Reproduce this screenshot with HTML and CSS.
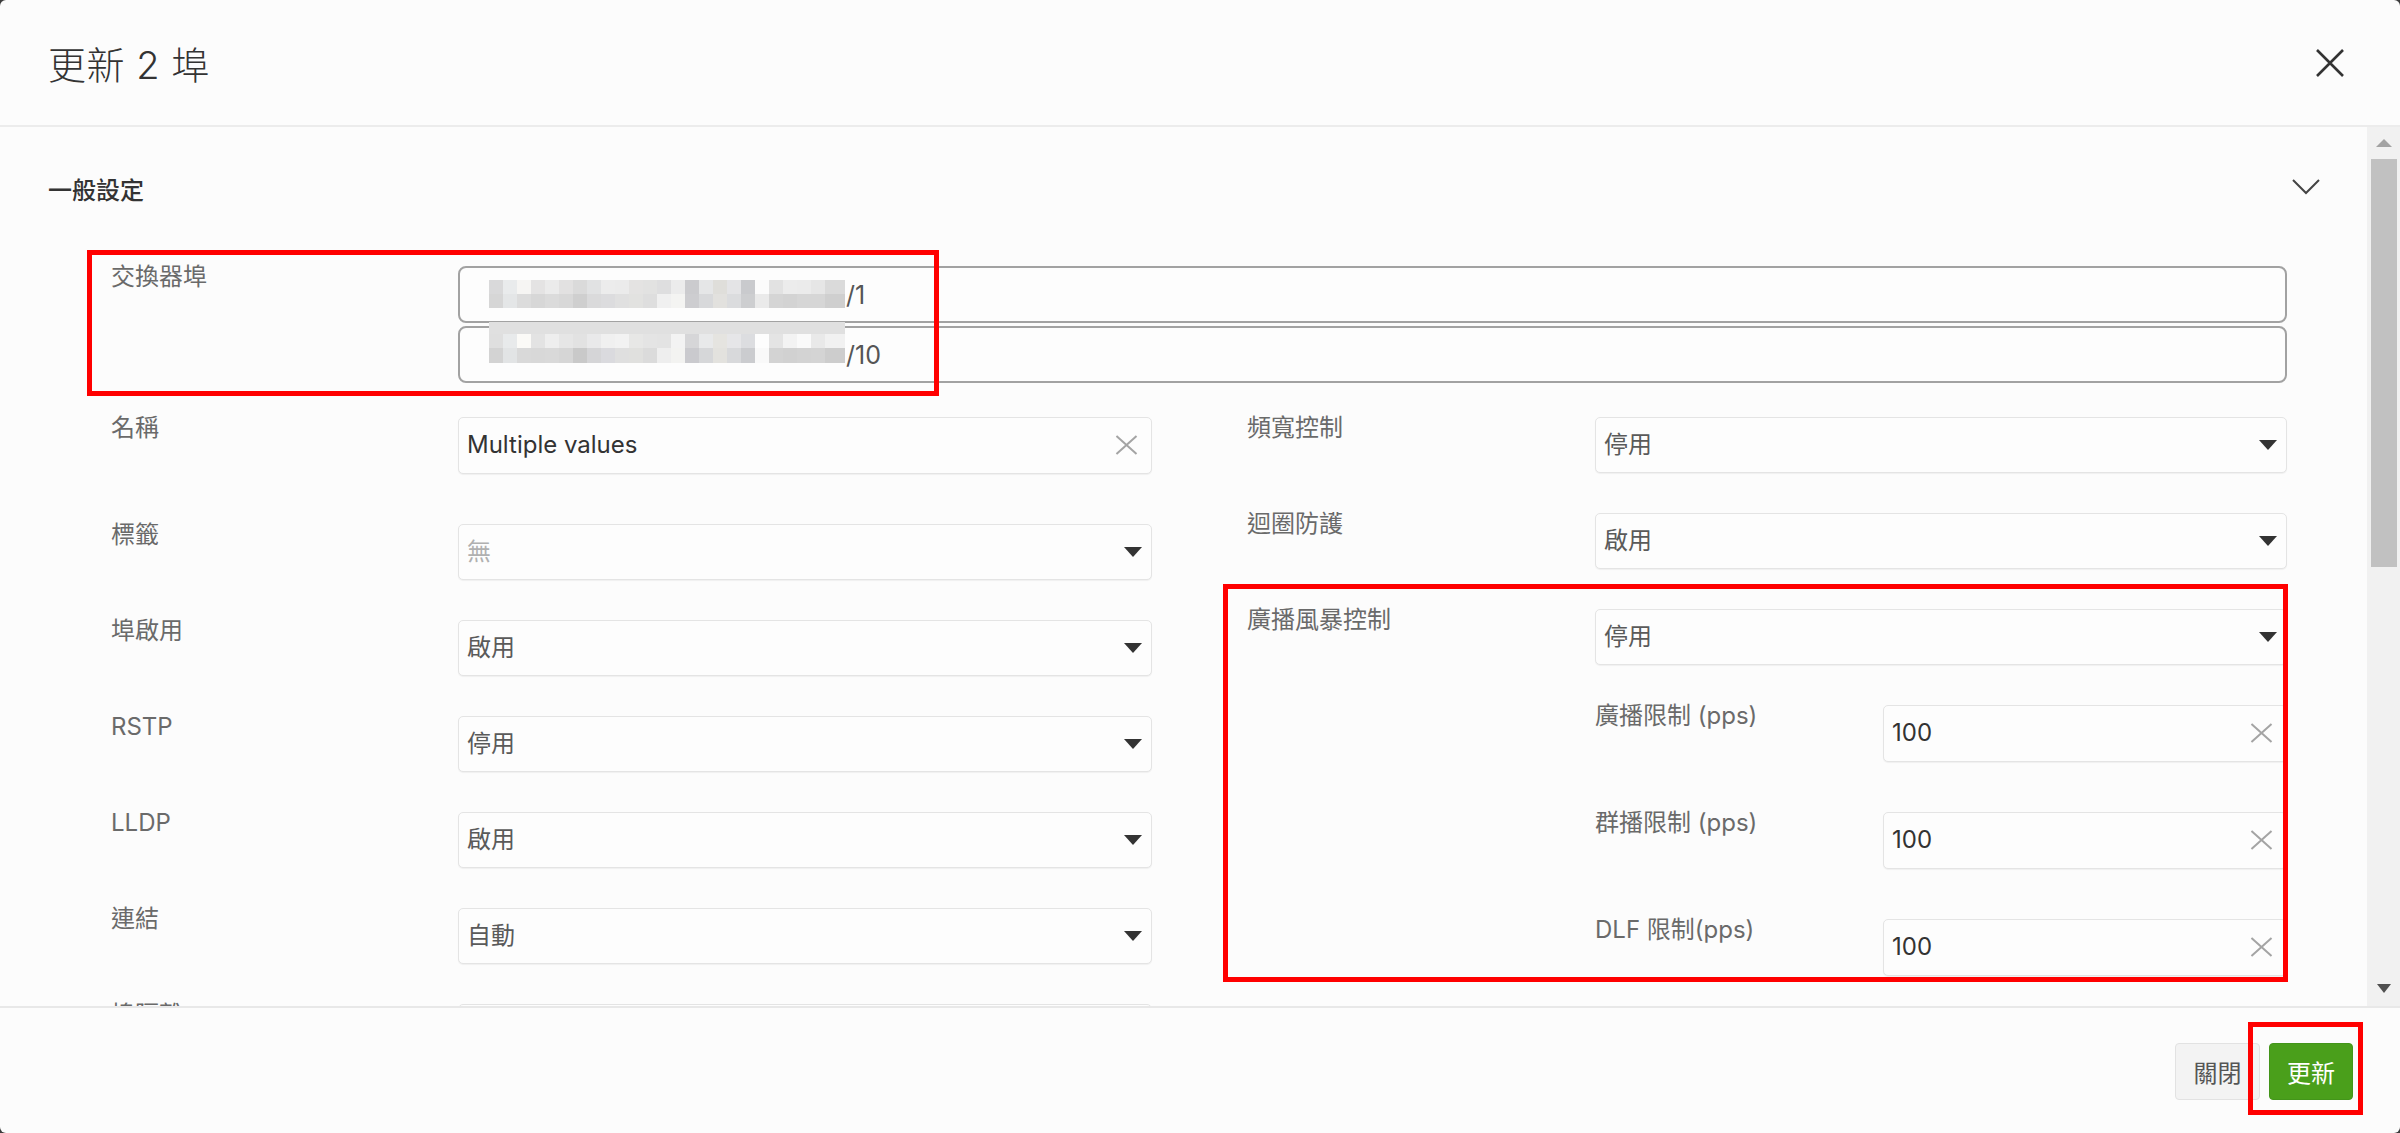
FILE: index.html
```html
<!DOCTYPE html>
<html>

<head>
  <meta charset="utf-8" />
  <title>更新 2 埠</title>
  <link rel="stylesheet" href="styles.css">
</head>

<body>
  <div class="modal">
    <div class="modal-head">
      <h1 class="modal-title">更新 2 埠</h1>
      <svg class="close" width="28" height="28" viewBox="0 0 28 28">
        <path d="M1 1 L27 27 M27 1 L1 27" stroke="#333" stroke-width="2.6" fill="none" />
      </svg>
    </div>

    <div class="modal-body">
      <div class="content">
        <div class="section-head">
          <span class="section-title">一般設定</span>
          <svg class="chevron" width="28" height="16" viewBox="0 0 28 16">
            <path d="M1 1 L14 14 L27 1" stroke="#444" stroke-width="2" fill="none" />
          </svg>
        </div>

        <div class="form">
          <div class="port-row">
            <div class="label">交換器埠</div>
            <div class="port-list">
              <div class="port-box">
                <span class="mosaic mosaic-a"></span><span class="port-no">/1</span>
              </div>
              <div class="port-box">
                <span class="mosaic mosaic-b"></span><span class="port-no">/10</span>
              </div>
            </div>
          </div>

          <div class="cols">
            <div class="col col-left">
              <div class="field text">
                <div class="label">名稱</div>
                <div class="control"><span class="value dark">Multiple values</span><span class="clear"></span></div>
              </div>
              <div class="field">
                <div class="label">標籤</div>
                <div class="control"><span class="value faint">無</span><span class="caret"></span></div>
              </div>
              <div class="field">
                <div class="label">埠啟用</div>
                <div class="control"><span class="value">啟用</span><span class="caret"></span></div>
              </div>
              <div class="field">
                <div class="label">RSTP</div>
                <div class="control"><span class="value">停用</span><span class="caret"></span></div>
              </div>
              <div class="field">
                <div class="label">LLDP</div>
                <div class="control"><span class="value">啟用</span><span class="caret"></span></div>
              </div>
              <div class="field">
                <div class="label">連結</div>
                <div class="control"><span class="value">自動</span><span class="caret"></span></div>
              </div>
              <div class="field">
                <div class="label">埠隔離</div>
                <div class="control"><span class="value">停用</span><span class="caret"></span></div>
              </div>
            </div>

            <div class="col col-right">
              <div class="field">
                <div class="label">頻寬控制</div>
                <div class="control"><span class="value">停用</span><span class="caret"></span></div>
              </div>
              <div class="field">
                <div class="label">迴圈防護</div>
                <div class="control"><span class="value">啟用</span><span class="caret"></span></div>
              </div>
              <div class="field">
                <div class="label">廣播風暴控制</div>
                <div class="control"><span class="value">停用</span><span class="caret"></span></div>
              </div>
              <div class="field text sub">
                <div class="label">廣播限制 (pps)</div>
                <div class="control"><span class="value dark">100</span><span class="clear"></span></div>
              </div>
              <div class="field text sub">
                <div class="label">群播限制 (pps)</div>
                <div class="control"><span class="value dark">100</span><span class="clear"></span></div>
              </div>
              <div class="field text sub">
                <div class="label">DLF 限制(pps)</div>
                <div class="control"><span class="value dark">100</span><span class="clear"></span></div>
              </div>
            </div>
          </div>
        </div>

        <div class="mark mark-ports"></div>
        <div class="mark mark-storm"></div>
      </div>

      <div class="scrollbar">
        <div class="sb-btn"><span class="sb-up"></span></div>
        <div class="sb-thumb"></div>
        <div class="sb-track"></div>
        <div class="sb-btn sb-btn-down"><span class="sb-down"></span></div>
      </div>
    </div>

    <div class="modal-foot">
      <button class="btn btn-close">關閉</button>
      <button class="btn btn-save">更新</button>
      <div class="mark mark-save"></div>
    </div>
  </div>
</body>

</html>
```

FILE: styles.css
```css
* {
  margin: 0;
  padding: 0;
  box-sizing: border-box;
  font-family: "Inter", "Noto Sans CJK TC", sans-serif;
}

html,
body {
  width: 100%;
  height: 100%;
  overflow: hidden;
  background-color: #3c3c3c;
}

.modal {
  height: 100vh;
  display: flex;
  flex-direction: column;
  background-color: #fcfcfc;
  border-radius: 6px;
  overflow: hidden;
}

/* header */

.modal-head {
  height: 127px;
  flex: 0 0 auto;
  display: flex;
  align-items: center;
  justify-content: space-between;
  padding: 0 56px 0 48px;
  border-bottom: 2px solid #ececec;
}

.modal-title {
  font-size: 38px;
  font-weight: 300;
  color: #333;
  letter-spacing: 0.5px;
}

.close {
  display: block;
}

/* body */

.modal-body {
  flex: 1 1 auto;
  display: flex;
  min-height: 0;
}

.content {
  flex: 1 1 auto;
  position: relative;
  overflow: hidden;
}

.section-head {
  display: flex;
  align-items: center;
  justify-content: space-between;
  padding: 48px 47px 0 48px;
  height: 80px;
}

.section-title {
  font-size: 24px;
  line-height: 32px;
  font-weight: 500;
  color: #333;
}

.chevron {
  display: block;
  margin-top: -8px;
}

.form {
  padding: 59px 80px 0 111px;
}

.label {
  font-size: 24px;
  line-height: 31px;
  color: #6a6a6a;
  margin-top: -5px;
}

.port-row {
  display: flex;
}

.port-row > .label {
  width: 347px;
  flex: 0 0 auto;
}

.port-list {
  flex: 1 1 auto;
  display: flex;
  flex-direction: column;
  gap: 3px;
}

.port-box {
  height: 57px;
  border: 2px solid #a2a2a2;
  border-radius: 8px;
  background-color: #fdfdfd;
  display: flex;
  align-items: center;
  padding-left: 29px;
}

.port-no {
  font-size: 25px;
  color: #555;
  margin-left: 1px;
}

.mosaic {
  display: block;
  width: 356px;
  height: 28px;
  background-repeat: no-repeat;
  background-size: 100% 14px, 100% 14px;
  background-position: 0 0, 0 14px;
}

.mosaic-a {
  margin-top: -2px;
  background-image:
    linear-gradient(to right, #d9d9da 0 14px, #e9ebec 14px 28px, #f6f5f3 28px 42px, #e4e3e3 42px 56px, #ebebeb 56px 70px, #e2e1e1 70px 84px, #dadada 84px 98px, #e1e2e3 98px 112px, #ececec 112px 126px, #ebebeb 126px 140px, #e4e3e2 140px 154px, #e2e2e1 154px 168px, #dededf 168px 182px, #ececec 182px 196px, #cbcbce 196px 210px, #e5e6e7 210px 224px, #dfdeda 224px 238px, #e4e4e6 238px 252px, #c9cacd 252px 266px, #fbfbfb 266px 280px, #e2e2e2 280px 294px, #ececec 294px 308px, #ebebeb 308px 322px, #e6e6e6 322px 336px, #dadada 336px),
    linear-gradient(to right, #d6d6d6 0 14px, #e4e6e7 14px 28px, #dcdcdc 28px 42px, #d7d7d7 42px 56px, #dbdbdb 56px 70px, #d8d8d8 70px 84px, #cfcfcf 84px 98px, #dadadb 98px 112px, #dcdcde 112px 126px, #e0e0e0 126px 140px, #e2e2e0 140px 154px, #dedede 154px 168px, #f0f0f0 168px 182px, #f4f4f2 182px 196px, #cdcdd0 196px 210px, #d8d9db 210px 224px, #e2e1de 224px 238px, #dbdcde 238px 252px, #cdced0 252px 266px, #eaeaea 266px 280px, #d5d5d5 280px 294px, #d3d3d3 294px 308px, #d6d6d6 308px 322px, #d6d6d6 322px 336px, #cfcfcf 336px);
}

.mosaic-b {
  height: 41px;
  align-self: flex-start;
  margin-top: -6px;
  background-size: 100% 12px, 100% 14px, 100% 15px;
  background-position: 0 0, 0 12px, 0 26px;
  background-image:
    linear-gradient(#e0e0e0, #e0e0e0),
    linear-gradient(to right, #dfdfdf 0 14px, #e8eaeb 14px 28px, #fbfaf7 28px 42px, #e3e3e3 42px 56px, #eeeeee 56px 70px, #e6e6e6 70px 84px, #e2e2e2 84px 98px, #e9e9ea 98px 112px, #f0f0f0 112px 126px, #f2f2f2 126px 140px, #e7e7e6 140px 154px, #e4e4e4 154px 168px, #e3e3e3 168px 182px, #f3f3f3 182px 196px, #d6d6d8 196px 210px, #e8e9ea 210px 224px, #e5e4e0 224px 238px, #e6e6e8 238px 252px, #dcdde0 252px 266px, #fdfdfd 266px 280px, #e4e4e4 280px 294px, #f3f3f3 294px 308px, #fafafa 308px 322px, #e9e9e9 322px 336px, #f1f1f1 336px),
    linear-gradient(to right, #d3d3d3 0 14px, #e2e4e5 14px 28px, #d9d9d9 28px 42px, #d8d8d8 42px 56px, #d9d9d9 56px 70px, #d6d6d6 70px 84px, #c9c9c9 84px 98px, #d5d5d7 98px 112px, #dadade 112px 126px, #dfdfdf 126px 140px, #e0e0de 140px 154px, #dbdbdb 154px 168px, #eeeeee 168px 182px, #f3f3f1 182px 196px, #cacace 196px 210px, #d6d7d9 210px 224px, #e3e2de 224px 238px, #d8d9db 238px 252px, #cbcccf 252px 266px, #f9f9f9 266px 280px, #d3d3d3 280px 294px, #d1d1d1 294px 308px, #d3d3d3 308px 322px, #d4d4d4 322px 336px, #cdcdcd 336px);
}

.cols {
  display: flex;
  gap: 95px;
  margin-top: 34px;
}

.col-left {
  width: 1041px;
  flex: 0 0 auto;
}

.col-right {
  flex: 1 1 auto;
}

.field {
  display: flex;
  margin-bottom: 40px;
}

.field > .label {
  width: 347px;
  flex: 0 0 auto;
}

.col-right .field > .label {
  width: 348px;
}

.field.text {
  margin-bottom: 50px;
}

.col-right .field.sub {
  margin-left: 348px;
}

.col-right .field.sub > .label {
  width: 288px;
}

.control {
  flex: 1 1 auto;
  height: 56px;
  display: flex;
  align-items: center;
  justify-content: space-between;
  padding: 0 9px 0 8px;
  background-color: #fdfdfd;
  border: 1px solid #e4e4e4;
  border-radius: 5px;
  box-shadow: 0 1px 1px rgba(0, 0, 0, 0.05);
}

.field.text .control {
  height: 57px;
  padding-right: 14px;
}

.value {
  font-size: 24px;
  color: #5a5a5a;
  margin-bottom: 6px;
}

.value.dark {
  color: #333;
  margin-bottom: 2px;
}

.value.faint {
  color: #b0b0b0;
}

.caret {
  width: 0;
  height: 0;
  border-left: 9px solid transparent;
  border-right: 9px solid transparent;
  border-top: 10px solid #333;
}

.clear {
  position: relative;
  width: 21px;
  height: 19px;
}

.clear::before,
.clear::after {
  content: "";
  position: absolute;
  left: -3px;
  top: 8px;
  width: 27px;
  height: 2px;
  background-color: #a4a4a4;
  transform: rotate(42deg);
}

.clear::after {
  transform: rotate(-42deg);
}

/* scrollbar */

.scrollbar {
  width: 33px;
  flex: 0 0 auto;
  display: flex;
  flex-direction: column;
  background-color: #f1f1f1;
}

.sb-btn {
  height: 32px;
  display: flex;
  align-items: center;
  justify-content: center;
}

.sb-btn-down {
  height: 36px;
}

.sb-up {
  width: 0;
  height: 0;
  border-left: 8px solid transparent;
  border-right: 8px solid transparent;
  border-bottom: 8px solid #a3a3a3;
}

.sb-down {
  width: 0;
  height: 0;
  border-left: 7px solid transparent;
  border-right: 7px solid transparent;
  border-top: 9px solid #505050;
}

.sb-thumb {
  height: 408px;
  margin: 0 3px 0 4px;
  background-color: #c1c1c1;
}

.sb-track {
  flex: 1 1 auto;
}

/* footer */

.modal-foot {
  height: 127px;
  flex: 0 0 auto;
  position: relative;
  display: flex;
  align-items: center;
  justify-content: flex-end;
  gap: 9px;
  padding: 2px 47px 0 0;
  border-top: 2px solid #e8e8e8;
}

.btn {
  height: 57px;
  font-size: 24px;
  border-radius: 4px;
  cursor: pointer;
}

.btn-close {
  width: 85px;
  color: #555;
  background-color: #f3f3f3;
  border: 1px solid #e2e2e2;
}

.btn-save {
  width: 84px;
  color: #fff;
  background-color: #4a9f1b;
  border: 1px solid #43951a;
}

/* red annotation boxes */

.mark {
  position: absolute;
  border: 5px solid #ff0000;
  pointer-events: none;
}

.mark-ports {
  left: 87px;
  top: 123px;
  width: 852px;
  height: 146px;
}

.mark-storm {
  left: 1223px;
  top: 457px;
  width: 1065px;
  height: 398px;
}

.mark-save {
  right: 37px;
  top: 14px;
  width: 115px;
  height: 93px;
}
```
